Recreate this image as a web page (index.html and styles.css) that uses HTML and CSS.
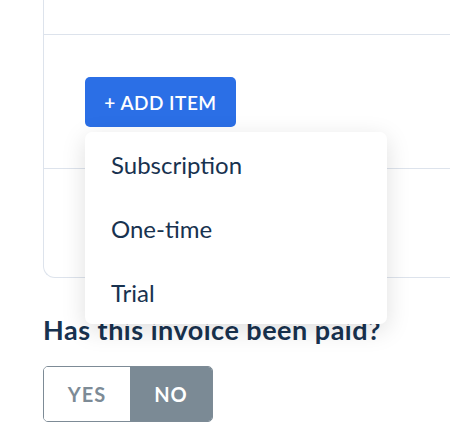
FILE: index.html
```html
<!DOCTYPE html>
<html>
<head>
<meta charset="utf-8">
<link rel="stylesheet" href="styles.css">
</head>
<body>
<div class="page">
  <div class="card">
    <div class="row row-top"></div>
    <div class="row row-actions">
      <div class="menu-anchor">
        <button class="add-btn">+ ADD ITEM</button>
        <ul class="dropdown">
          <li class="dropdown-item">Subscription</li>
          <li class="dropdown-item">One-time</li>
          <li class="dropdown-item">Trial</li>
        </ul>
      </div>
    </div>
    <div class="row row-bottom"></div>
  </div>
  <h2 class="question">Has this invoice been paid?</h2>
  <div class="toggle">
    <div class="toggle-opt toggle-yes">YES</div>
    <div class="toggle-opt toggle-no">NO</div>
  </div>
</div>
</body>
</html>
```
FILE: styles.css
```css
html, body {
  margin: 0;
  padding: 0;
  background: #ffffff;
  overflow: hidden;
}
body {
  font-family: Lato, "Noto Sans", sans-serif;
  color: #18324f;
}
.page {
  width: 450px;
  height: 438px;
  padding-left: 43px;
  box-sizing: border-box;
  overflow: hidden;
}
.card {
  width: 440px;
  border-left: 1px solid #dde3ec;
  border-bottom: 1px solid #dde3ec;
  border-bottom-left-radius: 12px;
}
.row {
  border-bottom: 1px solid #dde3ec;
}
.row:last-child {
  border-bottom: none;
}
.row-top {
  height: 34px;
}
.row-actions {
  height: 134px;
  box-sizing: border-box;
  padding: 42px 0 0 41px;
}
.row-bottom {
  height: 108px;
}
.menu-anchor {
  position: relative;
  width: 151px;
}
.add-btn {
  width: 151px;
  height: 50px;
  border: none;
  border-radius: 5px;
  background: #2b6fe6;
  color: #ffffff;
  font-family: Lato, "Noto Sans", sans-serif;
  font-size: 19px;
  font-weight: 600;
  letter-spacing: 0.5px;
  padding: 0;
}
.dropdown {
  position: absolute;
  left: 0;
  top: 55px;
  width: 302px;
  margin: 0;
  padding: 0;
  list-style: none;
  background: #ffffff;
  border-radius: 7px;
  box-shadow: 0 6px 24px rgba(0, 0, 0, 0.13);
  z-index: 10;
}
.dropdown-item {
  height: 64px;
  display: flex;
  align-items: center;
  padding-left: 26px;
  font-size: 24px;
  color: #18324f;
}
.question {
  margin: 36px 0 0 0;
  font-size: 27px;
  line-height: 32px;
  letter-spacing: 0.5px;
  font-weight: 700;
  color: #18324f;
}
.toggle {
  display: flex;
  width: 170px;
  height: 56px;
  margin-top: 20px;
  border: 1px solid #7d8b96;
  border-radius: 5px;
  box-sizing: border-box;
  overflow: hidden;
}
.toggle-opt {
  display: flex;
  align-items: center;
  justify-content: center;
  font-size: 20px;
  font-weight: 700;
  letter-spacing: 1px;
}
.toggle-yes {
  width: 86px;
  color: #7d8b96;
  background: #ffffff;
}
.toggle-no {
  flex: 1;
  color: #ffffff;
  background: #7b8a95;
}
```
